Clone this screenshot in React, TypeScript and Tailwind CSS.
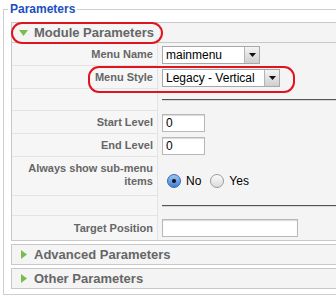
import React from "react";

const font = { fontFamily: '"Liberation Sans", Arial, sans-serif' };

function SelectBox({ text, w }: { text: string; w: string }) {
  return (
    <div className={`flex h-[18px] ${w} items-center border border-[#a8a8a8] bg-white`}>
      <span className="flex-1 truncate pl-[3px] text-[12px] leading-[16px] text-black">{text}</span>
      <span className="flex h-[16px] w-[15px] items-center justify-center border-l border-[#b5b5b5] bg-gradient-to-b from-[#f4f4f4] to-[#cfcfcf]">
        <svg width="7" height="4" viewBox="0 0 7 4">
          <path d="M0 0H7L3.5 4Z" fill="#111" />
        </svg>
      </span>
    </div>
  );
}

function TextInput({ w, value }: { w: string; value?: string }) {
  return (
    <div className={`h-[18px] ${w} border border-[#b8b8b8] bg-white pl-[3px] text-[12px] leading-[16px] text-black shadow-[inset_0_1px_1px_rgba(0,0,0,0.15)]`}>
      {value}
    </div>
  );
}

function Radio({ checked }: { checked?: boolean }) {
  return checked ? (
    <span className="flex h-[14px] w-[14px] items-center justify-center rounded-full border border-[#3a66a8] bg-gradient-to-b from-[#9cc4f2] to-[#3d7fd8]">
      <span className="block h-[4px] w-[4px] rounded-full bg-[#111]" />
    </span>
  ) : (
    <span className="block h-[14px] w-[14px] rounded-full border border-[#9a9a9a] bg-gradient-to-b from-[#fbfbfb] to-[#dcdcdc]" />
  );
}

function Row({ label, h, children }: { label?: React.ReactNode; h: string; children?: React.ReactNode }) {
  return (
    <div className={`flex ${h}`}>
      <div className="flex w-[146px] shrink-0 items-center justify-end border-b border-r border-[#e3e3e3] bg-[#f6f6f6] pr-[4px] text-right text-[11px] font-bold leading-[13px] text-[#666]">
        {label}
      </div>
      <div className="flex flex-1 items-center pl-[4px]">{children}</div>
    </div>
  );
}

function Spacer({ h }: { h: string }) {
  return (
    <Row h={h}>
      <div className="h-[2px] w-full border-t border-[#555] border-b-[#d8d8d8] border-b" />
    </Row>
  );
}

function Panel({ title, open, children }: { title: string; open?: boolean; children?: React.ReactNode }) {
  return (
    <div className="border border-[#c8c8c8] bg-[#f4f4f4]">
      <div className={`flex items-center ${open ? "h-[20px] border-b border-[#c8c8c8]" : "h-[19px]"}`}>
        <span className="ml-[7px] mr-[6px] flex w-[9px] justify-center">
          {open ? (
            <svg width="9" height="6" viewBox="0 0 9 6">
              <path d="M0 0H9L4.5 6Z" fill="#7dbb4a" />
            </svg>
          ) : (
            <svg width="6" height="9" viewBox="0 0 6 9">
              <path d="M0 0L6 4.5L0 9Z" fill="#7dbb4a" />
            </svg>
          )}
        </span>
        <span className="text-[13px] font-bold leading-[16px] text-[#666]">{title}</span>
      </div>
      {children}
    </div>
  );
}

export default function App() {
  return (
    <div className="relative h-[300px] w-[336px] overflow-hidden bg-white" style={font}>
      <fieldset className="ml-[3px] mt-[2px] w-[360px] border border-[#cfcfcf] pb-[5px] pl-[7px] pt-[6px]">
        <legend className="ml-[-3px] px-[2px] text-[12px] font-bold leading-[14px] text-[#1b4fc0]">Parameters</legend>
        <div className="flex flex-col gap-[3px]">
          <Panel title="Module Parameters" open>
            <Row label="Menu Name" h="h-[23px]">
              <SelectBox text="mainmenu" w="w-[98px]" />
            </Row>
            <Row label="Menu Style" h="h-[23px]">
              <SelectBox text="Legacy - Vertical" w="w-[118px]" />
            </Row>
            <Spacer h="h-[22px]" />
            <Row label="Start Level" h="h-[23px]">
              <TextInput w="w-[43px]" value="0" />
            </Row>
            <Row label="End Level" h="h-[23px]">
              <TextInput w="w-[43px]" value="0" />
            </Row>
            <Row
              label={
                <span className="block pb-[2px]">
                  Always show sub-menu
                  <br />
                  items
                </span>
              }
              h="h-[39px]"
            >
              <div className="mt-[9px] flex items-center text-[12px] text-black">
                <span className="ml-[5px]">
                  <Radio checked />
                </span>
                <span className="ml-[5px]">No</span>
                <span className="ml-[9px]">
                  <Radio />
                </span>
                <span className="ml-[5px]">Yes</span>
              </div>
            </Row>
            <Spacer h="h-[20px]" />
            <div className="flex h-[24px]">
              <div className="flex w-[146px] shrink-0 items-center justify-end border-r border-[#e3e3e3] bg-[#f6f6f6] pr-[4px] text-[11px] font-bold text-[#666]">
                Target Position
              </div>
              <div className="flex flex-1 items-center pl-[4px]">
                <TextInput w="w-[136px]" />
              </div>
            </div>
          </Panel>
          <Panel title="Advanced Parameters" />
          <Panel title="Other Parameters" />
        </div>
      </fieldset>
      <div className="pointer-events-none absolute left-[11px] top-[22px] h-[22px] w-[152px] rounded-[11px] border-2 border-[#e0141e]" />
      <div className="pointer-events-none absolute left-[88px] top-[66px] h-[27px] w-[207px] rounded-[11px] border-2 border-[#e0141e]" />
    </div>
  );
}
